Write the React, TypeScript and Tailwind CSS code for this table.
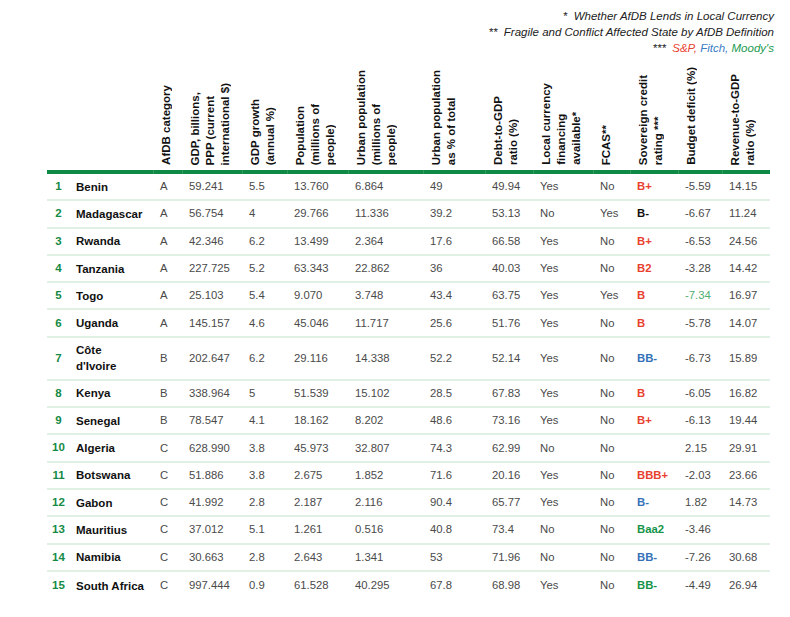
import React from "react";

type Row = {
  n: number;
  country: React.ReactNode;
  cat: string;
  gdp: string;
  growth: string;
  pop: string;
  urban: string;
  urbanPct: string;
  debt: string;
  local: string;
  fcas: string;
  rating: string;
  ratingColor: string;
  budget: string;
  budgetGreen?: boolean;
  revenue: string;
  tall?: boolean;
};

const RED = "text-[#e8412f]";
const BLUE = "text-[#3571b8]";
const GREEN = "text-[#159449]";
const BLACK = "text-[#111111]";

const rows: Row[] = [
  { n: 1, country: "Benin", cat: "A", gdp: "59.241", growth: "5.5", pop: "13.760", urban: "6.864", urbanPct: "49", debt: "49.94", local: "Yes", fcas: "No", rating: "B+", ratingColor: RED, budget: "-5.59", revenue: "14.15" },
  { n: 2, country: "Madagascar", cat: "A", gdp: "56.754", growth: "4", pop: "29.766", urban: "11.336", urbanPct: "39.2", debt: "53.13", local: "No", fcas: "Yes", rating: "B-", ratingColor: BLACK, budget: "-6.67", revenue: "11.24" },
  { n: 3, country: "Rwanda", cat: "A", gdp: "42.346", growth: "6.2", pop: "13.499", urban: "2.364", urbanPct: "17.6", debt: "66.58", local: "Yes", fcas: "No", rating: "B+", ratingColor: RED, budget: "-6.53", revenue: "24.56" },
  { n: 4, country: "Tanzania", cat: "A", gdp: "227.725", growth: "5.2", pop: "63.343", urban: "22.862", urbanPct: "36", debt: "40.03", local: "Yes", fcas: "No", rating: "B2", ratingColor: RED, budget: "-3.28", revenue: "14.42" },
  { n: 5, country: "Togo", cat: "A", gdp: "25.103", growth: "5.4", pop: "9.070", urban: "3.748", urbanPct: "43.4", debt: "63.75", local: "Yes", fcas: "Yes", rating: "B", ratingColor: RED, budget: "-7.34", budgetGreen: true, revenue: "16.97" },
  { n: 6, country: "Uganda", cat: "A", gdp: "145.157", growth: "4.6", pop: "45.046", urban: "11.717", urbanPct: "25.6", debt: "51.76", local: "Yes", fcas: "No", rating: "B", ratingColor: RED, budget: "-5.78", revenue: "14.07" },
  { n: 7, country: (<>Côte<br />d'Ivoire</>), cat: "B", gdp: "202.647", growth: "6.2", pop: "29.116", urban: "14.338", urbanPct: "52.2", debt: "52.14", local: "Yes", fcas: "No", rating: "BB-", ratingColor: BLUE, budget: "-6.73", revenue: "15.89", tall: true },
  { n: 8, country: "Kenya", cat: "B", gdp: "338.964", growth: "5", pop: "51.539", urban: "15.102", urbanPct: "28.5", debt: "67.83", local: "Yes", fcas: "No", rating: "B", ratingColor: RED, budget: "-6.05", revenue: "16.82" },
  { n: 9, country: "Senegal", cat: "B", gdp: "78.547", growth: "4.1", pop: "18.162", urban: "8.202", urbanPct: "48.6", debt: "73.16", local: "Yes", fcas: "No", rating: "B+", ratingColor: RED, budget: "-6.13", revenue: "19.44" },
  { n: 10, country: "Algeria", cat: "C", gdp: "628.990", growth: "3.8", pop: "45.973", urban: "32.807", urbanPct: "74.3", debt: "62.99", local: "No", fcas: "No", rating: "", ratingColor: RED, budget: "2.15", revenue: "29.91" },
  { n: 11, country: "Botswana", cat: "C", gdp: "51.886", growth: "3.8", pop: "2.675", urban: "1.852", urbanPct: "71.6", debt: "20.16", local: "Yes", fcas: "No", rating: "BBB+", ratingColor: RED, budget: "-2.03", revenue: "23.66" },
  { n: 12, country: "Gabon", cat: "C", gdp: "41.992", growth: "2.8", pop: "2.187", urban: "2.116", urbanPct: "90.4", debt: "65.77", local: "Yes", fcas: "No", rating: "B-", ratingColor: BLUE, budget: "1.82", revenue: "14.73" },
  { n: 13, country: "Mauritius", cat: "C", gdp: "37.012", growth: "5.1", pop: "1.261", urban: "0.516", urbanPct: "40.8", debt: "73.4", local: "No", fcas: "No", rating: "Baa2", ratingColor: GREEN, budget: "-3.46", revenue: "" },
  { n: 14, country: "Namibia", cat: "C", gdp: "30.663", growth: "2.8", pop: "2.643", urban: "1.341", urbanPct: "53", debt: "71.96", local: "No", fcas: "No", rating: "BB-", ratingColor: BLUE, budget: "-7.26", revenue: "30.68" },
  { n: 15, country: "South Africa", cat: "C", gdp: "997.444", growth: "0.9", pop: "61.528", urban: "40.295", urbanPct: "67.8", debt: "68.98", local: "Yes", fcas: "No", rating: "BB-", ratingColor: GREEN, budget: "-4.49", revenue: "26.94" },
];

const COLS = "grid grid-cols-[23px_83px_29px_60px_45px_61px_75px_62px_48px_60px_37px_48px_44px_48px]";

const headers: React.ReactNode[] = [
  <>AfDB category</>,
  <>GDP, billions,<br />PPP (current<br />international $)</>,
  <>GDP growth<br />(annual %)</>,
  <>Population<br />(millions of<br />people)</>,
  <>Urban population<br />(millions of<br />people)</>,
  <>Urban population<br />as % of total</>,
  <>Debt-to-GDP<br />ratio (%)</>,
  <>Local currency<br />financing<br />available*</>,
  <>FCAS**</>,
  <>Sovereign credit<br />rating ***</>,
  <>Budget deficit (%)</>,
  <>Revenue-to-GDP<br />ratio (%)</>,
];

const cell = "pl-[7px] whitespace-nowrap";

export default function App() {
  return (
    <div className="w-[790px] h-[617px] bg-white overflow-hidden font-['Liberation_Sans',Arial,sans-serif] text-[#4a4a4a]">
      {/* Notes */}
      <div className="pt-[8px] pr-[16px] flex flex-col items-end text-[11.5px] italic leading-[16px] text-[#222]">
        <div className="whitespace-pre">*  Whether AfDB Lends in Local Currency</div>
        <div className="whitespace-pre">**  Fragile and Conflict Affected State by AfDB Definition</div>
        <div className="whitespace-pre">
          <span>***  </span>
          <span className="text-[#e8412f]">S&amp;P,</span>{" "}
          <span className="text-[#3a7cc4]">Fitch,</span>{" "}
          <span className="text-[#1b9a50]">Moody's</span>
        </div>
      </div>

      <div className="ml-[47px] w-[723px]">
        {/* Header */}
        <div className={`${COLS} h-[114px] items-end pb-[5px]`}>
          <div />
          <div />
          {headers.map((h, i) => (
            <div key={i} className="pl-[6px] flex items-end">
              <div className="[writing-mode:vertical-rl] rotate-180 text-[11.5px] leading-[15px] font-bold text-[#111] whitespace-nowrap">
                {h}
              </div>
            </div>
          ))}
        </div>

        {/* Green bar */}
        <div className={`${COLS} h-[4px] bg-[#0e8a46]`}>
          {Array.from({ length: 14 }).map((_, i) => (
            <div key={i} className={i > 1 ? "border-l border-[#2f9c5d]" : ""} />
          ))}
        </div>

        {/* Rows */}
        {rows.map((r, idx) => (
          <div
            key={r.n}
            className={`${COLS} items-center text-[11.3px] ${r.tall ? "h-[43px]" : "h-[27.3px]"} ${
              idx < rows.length - 1 ? "border-b-2 border-[#e0f0e5]" : ""
            }`}
          >
            <div className="text-center font-bold text-[11.5px] text-[#158a45]">{r.n}</div>
            <div className="pl-[6px] font-bold text-[11.5px] leading-[16px] text-[#111]">{r.country}</div>
            <div className={cell}>{r.cat}</div>
            <div className={cell}>{r.gdp}</div>
            <div className={cell}>{r.growth}</div>
            <div className={cell}>{r.pop}</div>
            <div className={cell}>{r.urban}</div>
            <div className={cell}>{r.urbanPct}</div>
            <div className={cell}>{r.debt}</div>
            <div className={cell}>{r.local}</div>
            <div className={cell}>{r.fcas}</div>
            <div className={`${cell} font-bold ${r.ratingColor}`}>{r.rating}</div>
            <div className={`${cell} ${r.budgetGreen ? "text-[#4fae72]" : ""}`}>{r.budget}</div>
            <div className={cell}>{r.revenue}</div>
          </div>
        ))}
      </div>
    </div>
  );
}
